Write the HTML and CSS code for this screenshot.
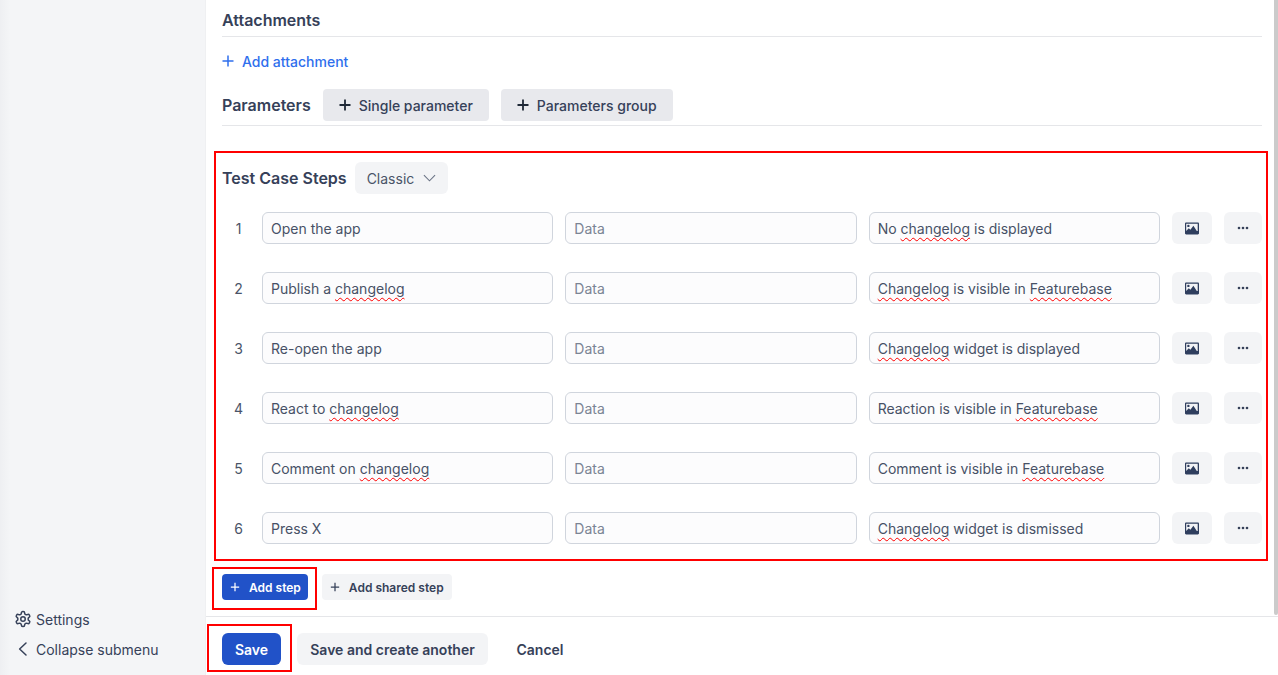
FILE: index.html
```html
<!DOCTYPE html>
<html lang="en">
<head>
<meta charset="utf-8">
<title>Test Case Steps</title>
<link rel="stylesheet" href="styles.css">
</head>
<body>
<div class="app">
  <aside class="sidebar">
    <a class="side-link"><svg class="side-icon" viewBox="0 0 24 24" fill="none" stroke="currentColor" stroke-width="2" stroke-linecap="round" stroke-linejoin="round"><path d="M12.22 2h-.44a2 2 0 0 0-2 2v.18a2 2 0 0 1-1 1.73l-.43.25a2 2 0 0 1-2 0l-.15-.08a2 2 0 0 0-2.73.73l-.22.38a2 2 0 0 0 .73 2.73l.15.1a2 2 0 0 1 1 1.72v.51a2 2 0 0 1-1 1.74l-.15.09a2 2 0 0 0-.73 2.73l.22.38a2 2 0 0 0 2.73.73l.15-.08a2 2 0 0 1 2 0l.43.25a2 2 0 0 1 1 1.73V20a2 2 0 0 0 2 2h.44a2 2 0 0 0 2-2v-.18a2 2 0 0 1 1-1.73l.43-.25a2 2 0 0 1 2 0l.15.08a2 2 0 0 0 2.73-.73l.22-.39a2 2 0 0 0-.73-2.73l-.15-.08a2 2 0 0 1-1-1.74v-.5a2 2 0 0 1 1-1.74l.15-.09a2 2 0 0 0 .73-2.73l-.22-.38a2 2 0 0 0-2.73-.73l-.15.08a2 2 0 0 1-2 0l-.43-.25a2 2 0 0 1-1-1.730V4a2 2 0 0 0-2-2z"/><circle cx="12" cy="12" r="3"/></svg><span>Settings</span></a>
    <a class="side-link"><svg class="side-icon" viewBox="0 0 24 24" fill="none" stroke="currentColor" stroke-width="2" stroke-linecap="round" stroke-linejoin="round"><path d="M16 4l-8.500 8 8.500 8"/></svg><span>Collapse submenu</span></a>
  </aside>

  <main class="main">
    <div class="scroll">
      <section class="attachments">
        <h2 class="section-title">Attachments</h2>
        <a class="add-link"><svg class="plus" viewBox="0 0 12 12"><path d="M6 .5v11M.5 6h11"/></svg>Add attachment</a>
      </section>

      <section class="parameters">
        <h2 class="section-title">Parameters</h2>
        <button class="btn-param"><svg class="plus" viewBox="0 0 12 12"><path d="M6 .5v11M.5 6h11"/></svg>Single parameter</button>
        <button class="btn-param"><svg class="plus" viewBox="0 0 12 12"><path d="M6 .5v11M.5 6h11"/></svg>Parameters group</button>
      </section>

      <section class="steps">
        <div class="steps-head">
          <h2 class="section-title">Test Case Steps</h2>
          <button class="btn-classic">Classic<svg class="chev" viewBox="0 0 14 8"><path d="M1 1l6 6 6-6"/></svg></button>
        </div>

        <div class="step">
          <div class="num">1</div>
          <div class="field">Open the app</div>
          <div class="field placeholder">Data</div>
          <div class="field">No <span class="typo">changelog</span> is displayed</div>
          <button class="tool"><svg class="img-icon" viewBox="0 0 14 12"><path fill-rule="evenodd" d="M1.200 0h11.600C13.500 0 14 .5 14 1.200v9.600c0 .7-.5 1.200-1.200 1.200H1.200C.5 12 0 11.500 0 10.800V1.200C0 .5.5 0 1.200 0zM1.200 1.200v7.300l2.600-2.700 1.600 1.500 3-4 3.400 5.100h.9V1.200zM3.400 2.200a1.200 1.200 0 1 1 0 2.400 1.200 1.200 0 0 1 0-2.400z"/></svg></button>
          <button class="tool tool-more"><svg class="dots" viewBox="0 0 12 4"><circle cx="2" cy="2" r="1.300"/><circle cx="6" cy="2" r="1.300"/><circle cx="10" cy="2" r="1.300"/></svg></button>
        </div>
        <div class="step">
          <div class="num">2</div>
          <div class="field">Publish a <span class="typo">changelog</span></div>
          <div class="field placeholder">Data</div>
          <div class="field"><span class="typo">Changelog</span> is visible in <span class="typo">Featurebase</span></div>
          <button class="tool"><svg class="img-icon" viewBox="0 0 14 12"><path fill-rule="evenodd" d="M1.200 0h11.600C13.500 0 14 .5 14 1.200v9.600c0 .7-.5 1.200-1.200 1.200H1.200C.5 12 0 11.500 0 10.800V1.200C0 .5.5 0 1.200 0zM1.200 1.200v7.300l2.600-2.700 1.600 1.500 3-4 3.400 5.100h.9V1.200zM3.400 2.200a1.200 1.200 0 1 1 0 2.400 1.200 1.200 0 0 1 0-2.400z"/></svg></button>
          <button class="tool tool-more"><svg class="dots" viewBox="0 0 12 4"><circle cx="2" cy="2" r="1.300"/><circle cx="6" cy="2" r="1.300"/><circle cx="10" cy="2" r="1.300"/></svg></button>
        </div>
        <div class="step">
          <div class="num">3</div>
          <div class="field">Re-open the app</div>
          <div class="field placeholder">Data</div>
          <div class="field"><span class="typo">Changelog</span> widget is displayed</div>
          <button class="tool"><svg class="img-icon" viewBox="0 0 14 12"><path fill-rule="evenodd" d="M1.200 0h11.600C13.500 0 14 .5 14 1.200v9.600c0 .7-.5 1.200-1.200 1.200H1.200C.5 12 0 11.500 0 10.800V1.200C0 .5.5 0 1.200 0zM1.200 1.200v7.300l2.600-2.700 1.600 1.500 3-4 3.400 5.100h.9V1.200zM3.400 2.200a1.200 1.200 0 1 1 0 2.400 1.200 1.200 0 0 1 0-2.400z"/></svg></button>
          <button class="tool tool-more"><svg class="dots" viewBox="0 0 12 4"><circle cx="2" cy="2" r="1.300"/><circle cx="6" cy="2" r="1.300"/><circle cx="10" cy="2" r="1.300"/></svg></button>
        </div>
        <div class="step">
          <div class="num">4</div>
          <div class="field">React to <span class="typo">changelog</span></div>
          <div class="field placeholder">Data</div>
          <div class="field">Reaction is visible in <span class="typo">Featurebase</span></div>
          <button class="tool"><svg class="img-icon" viewBox="0 0 14 12"><path fill-rule="evenodd" d="M1.200 0h11.600C13.500 0 14 .5 14 1.200v9.600c0 .7-.5 1.200-1.200 1.200H1.200C.5 12 0 11.500 0 10.800V1.200C0 .5.5 0 1.200 0zM1.200 1.200v7.300l2.600-2.700 1.600 1.500 3-4 3.400 5.100h.9V1.200zM3.400 2.200a1.200 1.200 0 1 1 0 2.400 1.200 1.200 0 0 1 0-2.400z"/></svg></button>
          <button class="tool tool-more"><svg class="dots" viewBox="0 0 12 4"><circle cx="2" cy="2" r="1.300"/><circle cx="6" cy="2" r="1.300"/><circle cx="10" cy="2" r="1.300"/></svg></button>
        </div>
        <div class="step">
          <div class="num">5</div>
          <div class="field">Comment on <span class="typo">changelog</span></div>
          <div class="field placeholder">Data</div>
          <div class="field">Comment is visible in <span class="typo">Featurebase</span></div>
          <button class="tool"><svg class="img-icon" viewBox="0 0 14 12"><path fill-rule="evenodd" d="M1.200 0h11.600C13.500 0 14 .5 14 1.200v9.600c0 .7-.5 1.200-1.200 1.200H1.200C.5 12 0 11.500 0 10.800V1.200C0 .5.5 0 1.200 0zM1.200 1.200v7.300l2.600-2.700 1.600 1.500 3-4 3.400 5.100h.9V1.200zM3.400 2.200a1.200 1.200 0 1 1 0 2.400 1.200 1.200 0 0 1 0-2.400z"/></svg></button>
          <button class="tool tool-more"><svg class="dots" viewBox="0 0 12 4"><circle cx="2" cy="2" r="1.300"/><circle cx="6" cy="2" r="1.300"/><circle cx="10" cy="2" r="1.300"/></svg></button>
        </div>
        <div class="step">
          <div class="num">6</div>
          <div class="field">Press X</div>
          <div class="field placeholder">Data</div>
          <div class="field"><span class="typo">Changelog</span> widget is dismissed</div>
          <button class="tool"><svg class="img-icon" viewBox="0 0 14 12"><path fill-rule="evenodd" d="M1.200 0h11.600C13.500 0 14 .5 14 1.200v9.600c0 .7-.5 1.200-1.200 1.200H1.200C.5 12 0 11.500 0 10.800V1.200C0 .5.5 0 1.200 0zM1.200 1.200v7.300l2.600-2.700 1.600 1.500 3-4 3.400 5.100h.9V1.200zM3.400 2.200a1.200 1.200 0 1 1 0 2.400 1.200 1.200 0 0 1 0-2.400z"/></svg></button>
          <button class="tool tool-more"><svg class="dots" viewBox="0 0 12 4"><circle cx="2" cy="2" r="1.300"/><circle cx="6" cy="2" r="1.300"/><circle cx="10" cy="2" r="1.300"/></svg></button>
        </div>

        <div class="add-row">
          <button class="btn-small btn-small-primary"><svg class="plus" viewBox="0 0 12 12"><path d="M6 1v10M1 6h10"/></svg>Add step</button>
          <button class="btn-small"><svg class="plus" viewBox="0 0 12 12"><path d="M6 1v10M1 6h10"/></svg>Add shared step</button>
        </div>
      </section>
      <div class="scrollbar"></div>
    </div>

    <footer class="footer">
      <button class="btn btn-primary">Save</button>
      <button class="btn btn-secondary">Save and create another</button>
      <button class="btn btn-ghost">Cancel</button>
    </footer>
  </main>
</div>
<div class="mark mark-steps"></div>
<div class="mark mark-add"></div>
<div class="mark mark-save"></div>
</body>
</html>
```

FILE: styles.css
```css
* { box-sizing: border-box; }
html, body { margin: 0; height: 100%; overflow: hidden; }
body {
  position: relative;
  font-family: Inter, "Liberation Sans", sans-serif;
  font-size: 14px;
  color: #364159;
  background: #fff;
}
button { font-family: inherit; border: 0; cursor: pointer; padding: 0; }

.app { display: flex; height: 675px; }

.sidebar {
  width: 206px;
  flex: none;
  display: flex;
  flex-direction: column;
  justify-content: flex-end;
  gap: 10px;
  padding: 0 0 16px 14px;
  background: linear-gradient(90deg, #eeeff2 0, #f4f5f7 10px);
  border-right: 1px solid #eff0f2;
}
.side-link { display: flex; align-items: center; height: 20px; gap: 4px; color: #364159; }
.side-icon { width: 18px; height: 18px; flex: none; }

.main { flex: 1; min-width: 0; display: flex; flex-direction: column; }
.scroll { position: relative; height: 616px; padding: 0 16px; overflow: hidden; }
.scrollbar {
  position: absolute;
  top: 0;
  right: 0;
  width: 4px;
  height: 615px;
  border-radius: 0 0 2px 2px;
  background: #cbcbcb;
}

.section-title { margin: 0; font-size: 16px; line-height: 20px; font-weight: 600; color: #364159; }

.attachments { padding-top: 10px; }
.attachments .section-title { padding-bottom: 6px; border-bottom: 1px solid #e5e6e9; height: 27px; }
.add-link {
  display: flex;
  align-items: center;
  gap: 8px;
  height: 20px;
  margin-top: 14px;
  color: #2f6fed;
  font-weight: 500;
}
.plus { width: 12px; height: 12px; flex: none; fill: none; stroke: currentColor; stroke-width: 1.500; }

.parameters {
  display: flex;
  align-items: center;
  gap: 12px;
  margin-top: 18px;
  padding-bottom: 4px;
  border-bottom: 1px solid #e5e6e9;
}
.btn-param {
  display: flex;
  align-items: center;
  gap: 8px;
  height: 32px;
  padding: 0 16px;
  border-radius: 4px;
  background: #e8e9ed;
  color: #364159;
  font-size: 14px;
  font-weight: 500;
}
.btn-param .plus { stroke: #1f2937; stroke-width: 1.800; }

.steps { padding-top: 36px; }
.steps-head { display: flex; align-items: center; gap: 8px; height: 32px; margin-bottom: 18px; }
.btn-classic {
  display: flex;
  align-items: center;
  gap: 9px;
  height: 32px;
  padding: 0 12px;
  border-radius: 6px;
  background: #f3f4f6;
  color: #4a5468;
  font-size: 14px;
}
.chev { width: 13px; height: 8px; fill: none; stroke: #6b7486; stroke-width: 1.200; }

.step {
  display: grid;
  grid-template-columns: 28px 1fr 1fr 1fr 40px 38px;
  gap: 12px;
  align-items: center;
  height: 32px;
  margin-bottom: 28px;
}
.num { text-align: center; padding-left: 5px; color: #4a5468; }
.field {
  height: 32px;
  padding: 0 8px;
  line-height: 31px;
  white-space: nowrap;
  overflow: hidden;
  border: 1px solid #d0d5dd;
  border-radius: 6px;
  background: #fcfcfd;
  color: #475166;
}
.placeholder { color: #7b8494; }
.typo {
  text-decoration: underline wavy #f00 1.400px;
  text-underline-offset: 3px;
  text-decoration-skip-ink: none;
}
.tool {
  display: flex;
  align-items: center;
  justify-content: center;
  height: 32px;
  border-radius: 6px;
  background: #f3f4f6;
}
.img-icon { width: 14px; height: 13px; fill: #2f3e5e; }
.dots { width: 12px; height: 4px; fill: #364159; }

.add-row { display: flex; gap: 14px; margin-top: 30px; }
.btn-small {
  display: flex;
  align-items: center;
  gap: 9px;
  height: 26px;
  padding: 0 8px;
  border-radius: 4px;
  background: #f3f4f6;
  color: #364159;
  font-size: 12px;
  font-weight: 600;
}
.btn-small .plus { width: 10px; height: 10px; }
.btn-small-primary { padding-right: 7px; background: #2152c8; color: #fff; }

.footer {
  display: flex;
  align-items: center;
  gap: 16px;
  flex: 1;
  padding: 6px 16px 0;
  border-top: 1px solid #e5e6e9;
}
.btn { height: 32px; font-size: 14px; font-weight: 600; border-radius: 6px; background: none; }
.btn-primary { width: 59px; background: #2152c8; color: #fff; }
.btn-secondary { width: 191px; background: #f3f4f6; color: #364159; }
.btn-ghost { width: 78px; color: #364159; margin-left: -3px; }

.mark { position: absolute; border: 2px solid #f00; pointer-events: none; }
.mark-steps { left: 214px; top: 151px; width: 1054px; height: 410px; }
.mark-add { left: 212px; top: 567px; width: 105px; height: 43px; }
.mark-save { left: 207px; top: 624px; width: 85px; height: 48px; }
```
